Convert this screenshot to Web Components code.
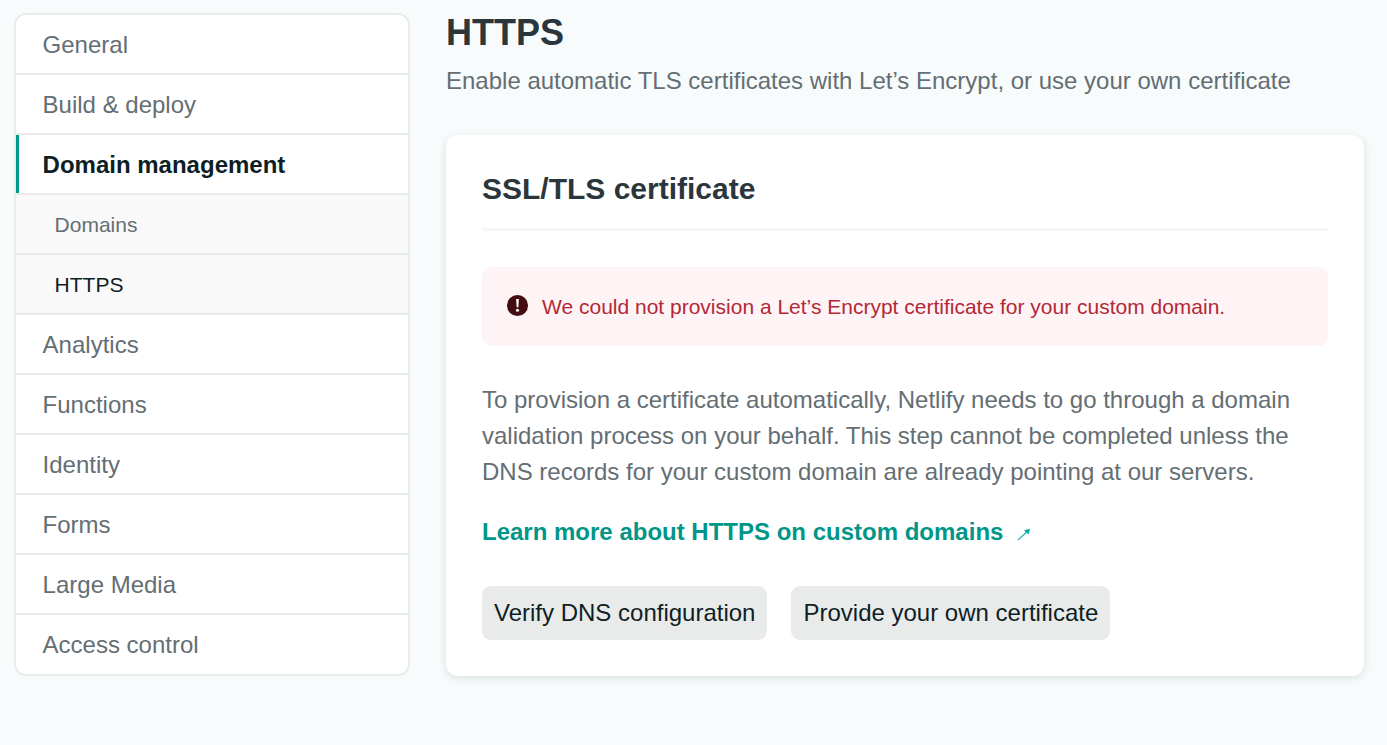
<!DOCTYPE html>
<html lang="en">
<head>
<meta charset="utf-8">
<title>HTTPS</title>
<style>
  html, body { margin: 0; height: 100%; }
  body {
    background: #f7fbfc;
    font-family: "Liberation Sans", Arial, sans-serif;
    color: #2a363c;
    overflow: hidden;
  }
</style>
</head>
<body>
<settings-page>
  <side-nav slot="nav">
    <nav-item>General</nav-item>
    <nav-item>Build &amp; deploy</nav-item>
    <nav-item active>Domain management</nav-item>
    <nav-item sub>Domains</nav-item>
    <nav-item sub current>HTTPS</nav-item>
    <nav-item>Analytics</nav-item>
    <nav-item>Functions</nav-item>
    <nav-item>Identity</nav-item>
    <nav-item>Forms</nav-item>
    <nav-item>Large Media</nav-item>
    <nav-item last>Access control</nav-item>
  </side-nav>

  <section-head heading="HTTPS">Enable automatic TLS certificates with Let’s Encrypt, or use your own certificate</section-head>

  <cert-card heading="SSL/TLS certificate">
    <error-note>We could not provision a Let’s Encrypt certificate for your custom domain.</error-note>
    <p slot="body">To provision a certificate automatically, Netlify needs to go through a domain validation process on your behalf. This step cannot be completed unless the DNS records for your custom domain are already pointing at our servers.</p>
    <ext-link slot="link">Learn more about HTTPS on custom domains</ext-link>
    <flat-button slot="actions">Verify DNS configuration</flat-button>
    <flat-button slot="actions">Provide your own certificate</flat-button>
  </cert-card>
</settings-page>

<script>
function define(name, html) {
  customElements.define(name, class extends HTMLElement {
    constructor() {
      super();
      this.attachShadow({ mode: 'open' });
    }
    connectedCallback() {
      this.shadowRoot.innerHTML = typeof html === 'function' ? html(this) : html;
    }
  });
}

define('settings-page', `
  <style>
    :host { display: flex; align-items: flex-start; gap: 36px; padding: 13px 23px 0 14px; box-sizing: border-box; width: 100%; }
    .nav { flex: 0 0 396px; }
    main { flex: 1; min-width: 0; }
  </style>
  <div class="nav"><slot name="nav"></slot></div>
  <main><slot></slot></main>
`);

define('side-nav', `
  <style>
    :host { display: block; background: #fff; border: 2px solid #e9ebeb; border-radius: 12px; overflow: hidden; box-sizing: border-box; width: 396px; }
  </style>
  <slot></slot>
`);

define('nav-item', `
  <style>
    :host { display: flex; align-items: center; box-sizing: border-box; height: 60px; padding: 2px 24px 0 26.6px; border-bottom: 2px solid #e9ebeb; font-size: 24px; color: #646e73; background: #fff; position: relative; }
    :host([last]) { border-bottom: 0; padding-top: 0; height: 59px; }
    :host([active]) { color: #0e1e25; font-weight: 700; }
    :host([active])::before { content: ""; position: absolute; left: 0; top: 0; bottom: 0; width: 3px; background: #009a8c; }
    :host([sub]) { font-size: 21px; padding-left: 38.6px; background: #f9f9f9; }
    :host([current]) { color: #0e1e25; }
  </style>
  <slot></slot>
`);

define('section-head', el => `
  <style>
    :host { display: block; }
    h1 { margin: 0; font-size: 36px; line-height: 40px; font-weight: 700; color: #2a363c; }
    p { margin: 10px 0 0; font-size: 24px; line-height: 36px; color: #646e73; }
  </style>
  <h1>${el.getAttribute('heading') || ''}</h1>
  <p><slot></slot></p>
`);

define('cert-card', el => `
  <style>
    :host { display: block; margin-top: 36px; background: #fff; border-radius: 12px; padding: 36px; box-shadow: 0 2px 8px rgba(14,30,37,.12); }
    h2 { margin: 0; font-size: 30px; line-height: 36px; font-weight: 700; color: #2a363c; padding-bottom: 21px; border-bottom: 3px solid #f6f7f7; }
    .note { margin-top: 36px; }
    ::slotted(p) { margin: 36px 0 0; font-size: 24px; line-height: 36px; color: #646e73; }
    .link { margin-top: 24px; }
    .actions { display: flex; gap: 24px; margin-top: 36px; }
  </style>
  <h2>${el.getAttribute('heading') || ''}</h2>
  <div class="note"><slot></slot></div>
  <slot name="body"></slot>
  <div class="link"><slot name="link"></slot></div>
  <div class="actions"><slot name="actions"></slot></div>
`);

define('error-note', `
  <style>
    :host { display: flex; align-items: center; gap: 13px; box-sizing: border-box; height: 79px; padding: 0 24px; background: #fef4f5; border-radius: 9px; color: #b32838; font-size: 21px; }
    svg { width: 23px; height: 23px; flex: none; margin-top: -2px; }
  </style>
  <svg viewBox="0 0 24 24" aria-hidden="true">
    <circle cx="12" cy="12" r="11" fill="#420c12"/>
    <path d="M10.6 5.2h2.8l-.5 8.6h-1.8z" fill="#fff"/>
    <circle cx="12" cy="16.9" r="1.6" fill="#fff"/>
  </svg>
  <span><slot></slot></span>
`);

define('ext-link', `
  <style>
    :host { display: flex; align-items: center; color: #009688; font-size: 24px; line-height: 36px; font-weight: 700; }
    svg { width: 13px; height: 13px; margin-left: 13.5px; margin-top: 5px; }
  </style>
  <slot></slot>
  <svg viewBox="0 0 14 14" aria-hidden="true" fill="none" stroke="#00ad9f" stroke-width="1.2">
    <path d="M1 13 12.5 2.2"/>
    <path d="M7.6 2.4 14 .8 12.4 7z" fill="#00ad9f" stroke="none"/>
  </svg>
`);

define('flat-button', `
  <style>
    :host { display: inline-flex; align-items: center; height: 54px; padding: 0 12px; background: #e9ebeb; border-radius: 9px; color: #0e1e25; font-size: 24px; white-space: nowrap; }
  </style>
  <slot></slot>
`);
</script>
</body>
</html>
